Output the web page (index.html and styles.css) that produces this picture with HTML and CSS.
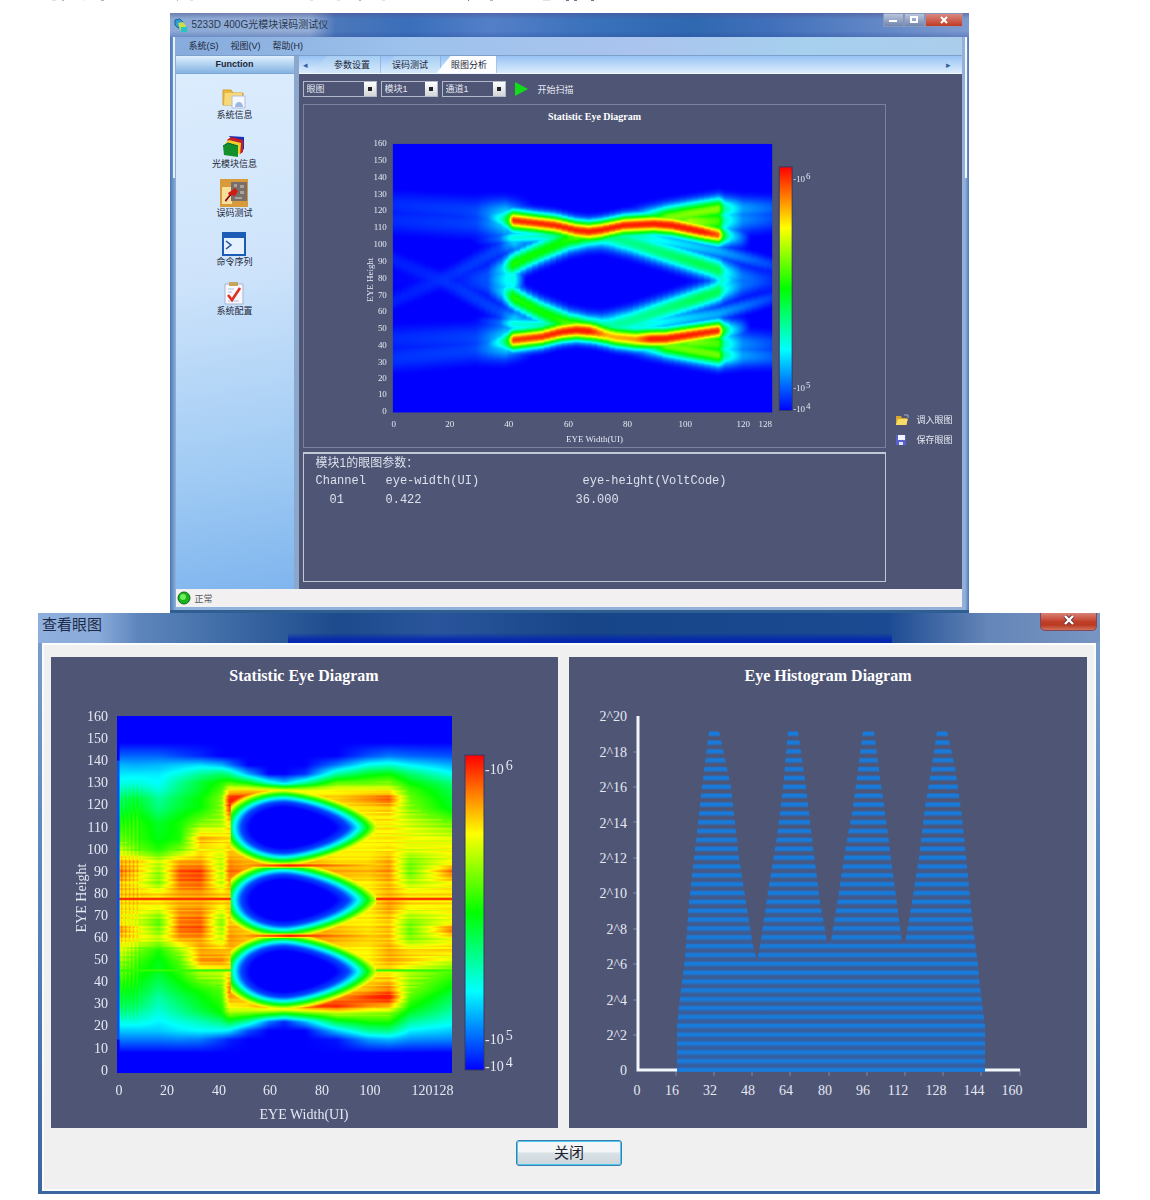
FILE: index.html
```html
<!DOCTYPE html>
<html lang="zh">
<head>
<meta charset="utf-8">
<title>5233D 400G光模块误码测试仪</title>
<link rel="stylesheet" href="styles.css">
</head>
<body>
<svg class="edge-marks" width="600" height="1" aria-hidden="true"><path d="M52 .5h4M83 .5h1M190 .5h3M310 .5h3M337 .5h3M382 .5h3M543 .5h7" stroke="#e2e2e6"/><path d="M62 .5h2M101 .5h3M177 .5h1M359 .5h2M490 .5h3" stroke="#b9b4b4"/><path d="M468 .5h1M566 .5h3M574 .5h3M591 .5h3" stroke="#75708c"/></svg>
<main class="page">

<section class="window app" aria-label="误码测试仪">
  <header class="titlebar">
    <svg class="logo" width="14" height="15" viewBox="0 0 14 15"><path d="M1 2l5-1 3 3v5l-5 1-3-3z" fill="#2f9fd8" stroke="#1c5f92"/><path d="M4 5l5-1 3 4-1 5-5-1z" fill="#c9e04a"/><path d="M7 9h6v5H7z" fill="#22c6c4"/></svg>
    <h1>5233D 400G光模块误码测试仪</h1>
    <div class="win-buttons">
      <button class="wb" aria-label="最小化"><svg width="10" height="8" viewBox="0 0 10 8"><path d="M1 5h8" stroke="#fff" stroke-width="2"/></svg></button>
      <button class="wb" aria-label="最大化"><svg width="10" height="8" viewBox="0 0 10 8"><rect x="2" y="1" width="6" height="5" fill="none" stroke="#fff" stroke-width="2"/></svg></button>
      <button class="wb wb-close" aria-label="关闭窗口"><svg width="10" height="8" viewBox="0 0 10 8"><path d="M2 1l6 6M8 1L2 7" stroke="#fff" stroke-width="2"/></svg></button>
    </div>
  </header>
  <nav class="menubar"><a href="#sys">系统(S)</a><a href="#view">视图(V)</a><a href="#help">帮助(H)</a></nav>
  <div class="workspace">
    <aside class="sidebar">
      <h2>Function</h2>
      <nav class="functions">
        <a href="#info"><svg width="24" height="22" viewBox="0 0 24 22"><path d="M1 3h8l2 3h10v12H1z" fill="#e9b93c"/><path d="M1 3h8l2 3h10v12H1z" fill="none" stroke="#d0a030"/><path d="M3 6h17v12H2z" fill="#f8d978"/><path d="M10 9h13v12H10z" fill="#f4f8ff" stroke="#b2bedb"/><path d="M13 20a4 5 0 0 1 8 0z" fill="#9db6e6"/></svg>系统信息</a>
        <a href="#module"><svg width="24" height="24" viewBox="0 0 24 24"><path d="M7 2l15 1v12l-3 3z" fill="#1d2fb4"/><path d="M5 6l4-3 12 3v12l-3 2z" fill="#c81d24"/><path d="M3 9l4-3 12 3-1 12z" fill="#efd12c"/><path d="M1 12l5-3 10 3v11L2 21z" fill="#13902a"/><path d="M1 12l5-3 10 3" stroke="#063" fill="none"/></svg>光模块信息</a>
        <a href="#ber"><svg width="28" height="28" viewBox="0 0 28 28"><path d="M0 0h28v28H0z" fill="#d89a3a"/><path d="M2 8h10v17H2z" fill="#f6df9b"/><path d="M11 3h16v19H11z" fill="#786f6a"/><path d="M14 5h3v3h-3zM20 6h4v3h-4zM20 12h4v3h-4zM15 18h7v2h-7z" fill="#a9a29c"/><path d="M8 14l3-2 4-3 3 3-3 5-4-1-5 7-1-2 4-5z" fill="#cf1c14"/><path d="M5 22l6-6" stroke="#402" stroke-width="1"/></svg>误码测试</a>
        <a href="#cmd"><svg width="24" height="24" viewBox="0 0 24 24"><rect x="1" y="1" width="22" height="22" fill="#e6f1ff" stroke="#1c5cb4" stroke-width="2"/><path d="M1 1h22v5H1z" fill="#1c5cb4"/><path d="M4 9l5 4-5 4" fill="none" stroke="#24509c" stroke-width="1.6"/></svg>命令序列</a>
        <a href="#config"><svg width="22" height="24" viewBox="0 0 22 24"><path d="M2 3h18v20H2z" fill="#f7f8fd" stroke="#aab4cf"/><path d="M6 1h9v4H6z" fill="#c5a45c"/><path d="M5 8h6M5 11h4M5 20h11" stroke="#b3bfe0"/><path d="M5 14l4 5 8-12" fill="none" stroke="#e12f23" stroke-width="2.6"/></svg>系统配置</a>
      </nav>
    </aside>
    <div class="content">
      <div class="tabs">
        <button class="arrow" aria-label="向左">◂</button>
        <button class="tab">参数设置</button>
        <button class="tab">误码测试</button>
        <button class="tab active">眼图分析</button>
        <button class="arrow last" aria-label="向右">▸</button>
      </div>
      <div class="toolbar">
        <select class="w-l" aria-label="图类型"><option>眼图</option></select>
        <select class="w-s" aria-label="模块"><option>模块1</option></select>
        <select class="w-m" aria-label="通道"><option>通道1</option></select>
        <button class="scan"><svg width="14" height="14" viewBox="0 0 14 14"><path d="M1 0l13 7-13 7z" fill="#12dc1a"/></svg>开始扫描</button>
      </div>
      <div class="panes">
        <div class="left">
          <figure class="chart framed">
            <svg viewBox="0 0 582 343" class="t9" role="img" aria-label="Statistic Eye Diagram">
              <defs><linearGradient id="heat" x1="0" y1="0" x2="0" y2="1"><stop offset="0" stop-color="#f00"/><stop offset=".25" stop-color="#ff0"/><stop offset=".5" stop-color="#0f0"/><stop offset=".75" stop-color="#0ff"/><stop offset="1" stop-color="#00f"/></linearGradient></defs>
              <text class="ttl" x="291" y="15">Statistic Eye Diagram</text>
              <foreignObject x="89" y="39" width="380" height="269"><canvas id="eye1" class="heat" width="256" height="320"></canvas></foreignObject>
              <g class="end"><text x="83" y="41">160</text><text x="83" y="58">150</text><text x="83" y="75">140</text><text x="83" y="92">130</text><text x="83" y="108">120</text><text x="83" y="125">110</text><text x="83" y="142">100</text><text x="83" y="159">90</text><text x="83" y="176">80</text><text x="83" y="193">70</text><text x="83" y="209">60</text><text x="83" y="226">50</text><text x="83" y="243">40</text><text x="83" y="260">30</text><text x="83" y="276">20</text><text x="83" y="293">10</text><text x="83" y="310">0</text></g>
              <g class="mid"><text x="90" y="323">0</text><text x="146" y="323">20</text><text x="205" y="323">40</text><text x="265" y="323">60</text><text x="324" y="323">80</text><text x="382" y="323">100</text><text x="440" y="323">120</text><text x="462" y="323">128</text><text x="291" y="338">EYE Width(UI)</text><text transform="translate(69 175) rotate(-90)">EYE Height</text></g>
              <rect x="476" y="62" width="13" height="244" fill="url(#heat)" stroke="#343b66"/>
              <text x="490" y="77">-10<tspan dy="-3" dx="1">6</tspan></text><text x="490" y="286">-10<tspan dy="-3" dx="1">5</tspan></text><text x="490" y="308">-10<tspan dy="-3" dx="1">4</tspan></text>
            </svg>
          </figure>
          <section class="params">
            <h3>模块1的眼图参数：</h3>
            <table>
              <thead><tr><th class="c1">Channel</th><th class="c2">eye-width(UI)</th><th class="c3 shift">eye-height(VoltCode)</th></tr></thead>
              <tbody><tr><td class="c1 num">01</td><td class="c2">0.422</td><td class="c3">36.000</td></tr></tbody>
            </table>
          </section>
        </div>
        <div class="actions">
          <button><svg width="14" height="12" viewBox="0 0 14 12"><path d="M1 2h5l1 2h5v7H1z" fill="#d9a72e"/><path d="M3 5h10l-2 6H1z" fill="#f7dc6a"/><path d="M9 1h4v3" fill="none" stroke="#9aa9d8"/></svg>调入眼图</button>
          <button><svg width="12" height="12" viewBox="0 0 12 12"><path d="M1 1h10v10H1z" fill="#5a5fd0"/><path d="M3 1h7v5H3z" fill="#f1f3ff"/><path d="M4 8h4v3H4z" fill="#dfe3fa"/></svg>保存眼图</button>
        </div>
      </div>
    </div>
  </div>
  <footer class="status"><svg width="14" height="14" viewBox="0 0 14 14"><circle cx="7" cy="7" r="6" fill="#18b21c" stroke="#146b18"/><circle cx="6" cy="6" r="3" fill="#6df05a"/></svg>正常</footer>
</section>

<section class="window dialog" role="dialog" aria-labelledby="dlg-title">
  <header class="dlg-bar"><h2 id="dlg-title">查看眼图</h2><button class="dlg-x" aria-label="关闭对话框"><svg width="12" height="10" viewBox="0 0 12 10"><path d="M2 1l8 8M10 1L2 9" stroke="#5b3a42" stroke-width="4"/><path d="M2 1l8 8M10 1L2 9" stroke="#fff" stroke-width="2.4"/></svg></button></header>
  <div class="dlg-body">
    <div class="pair">
      <figure class="chart panel">
        <svg viewBox="0 0 507 471" class="t14" role="img" aria-label="Statistic Eye Diagram">
          <text class="ttl" x="253" y="24">Statistic Eye Diagram</text>
          <foreignObject x="66" y="59" width="335" height="357"><canvas id="eye2" class="heat" width="256" height="320"></canvas></foreignObject>
          <g class="end"><text x="57" y="64">160</text><text x="57" y="86">150</text><text x="57" y="108">140</text><text x="57" y="130">130</text><text x="57" y="152">120</text><text x="57" y="175">110</text><text x="57" y="197">100</text><text x="57" y="219">90</text><text x="57" y="241">80</text><text x="57" y="263">70</text><text x="57" y="285">60</text><text x="57" y="307">50</text><text x="57" y="329">40</text><text x="57" y="351">30</text><text x="57" y="373">20</text><text x="57" y="396">10</text><text x="57" y="418">0</text></g>
          <g class="mid"><text x="68" y="438">0</text><text x="116" y="438">20</text><text x="168" y="438">40</text><text x="219" y="438">60</text><text x="271" y="438">80</text><text x="319" y="438">100</text><text x="371" y="438">120</text><text x="392" y="438">128</text><text x="253" y="462">EYE Width(UI)</text><text transform="translate(35 241) rotate(-90)">EYE Height</text></g>
          <rect x="414" y="98" width="19" height="315" fill="url(#heat)" stroke="#343b66"/>
          <text x="434" y="117">-10<tspan dy="-4" dx="2">6</tspan></text><text x="434" y="387">-10<tspan dy="-4" dx="2">5</tspan></text><text x="434" y="414">-10<tspan dy="-4" dx="2">4</tspan></text>
        </svg>
      </figure>
      <figure class="chart panel">
        <svg viewBox="0 0 518 471" class="t14" role="img" aria-label="Eye Histogram Diagram">
          <defs>
            <pattern id="bars" x="0" y="74" width="518" height="8.85" patternUnits="userSpaceOnUse"><path d="M0 1h518v3.6H0z" fill="#177bdc"/><path d="M0 .2h518v.8H0zM0 4.6h518v.8H0z" fill="#2a6cbb"/></pattern>
            <linearGradient id="fillin" x1="0" y1="0" x2="0" y2="1"><stop offset=".2" stop-color="#2f62ab" stop-opacity="0"/><stop offset=".6" stop-color="#2f62ab" stop-opacity=".5"/><stop offset="1" stop-color="#2f62ab" stop-opacity=".85"/></linearGradient>
            <path id="hist" d="M108 415V369L111 340 116 301 120 245 125 201 133 130 140 74H150L162 130 170 201 177 245 184 289 188 303 191 289 195 262 200 228 208 180 214 130 219 74H229L237 130 244 190 251 245 258 284H262L270 235 275 200 284 150 288 120 294 74H305L311 120 318 170 323 210 330 262 333 286H336L343 245 350 200 356 150 361 120 368 74H378L386 110 393 160 398 210 404 270 408 300 411 330 416 369V415z"/>
          </defs>
          <text class="ttl" x="259" y="24">Eye Histogram Diagram</text>
          <g stroke="#8088a4"><path d="M64 95h5M64 130h5M64 165h5M64 201h5M64 236h5M64 272h5M64 307h5M64 343h5M64 378h5M107 413v6M145 413v6M183 413v6M221 413v6M260 413v6M298 413v6M336 413v6M374 413v6M412 413v6M451 413v6"/></g>
          <path d="M69 59v354h382" fill="none" stroke="#f2f5fa" stroke-width="3"/>
          <use href="#hist" fill="url(#fillin)"/><use href="#hist" fill="url(#bars)"/>
          <g class="end"><text x="58" y="64">2^20</text><text x="58" y="100">2^18</text><text x="58" y="135">2^16</text><text x="58" y="171">2^14</text><text x="58" y="206">2^12</text><text x="58" y="241">2^10</text><text x="58" y="277">2^8</text><text x="58" y="312">2^6</text><text x="58" y="348">2^4</text><text x="58" y="383">2^2</text><text x="58" y="418">0</text></g>
          <g class="mid"><text x="68" y="438">0</text><text x="103" y="438">16</text><text x="141" y="438">32</text><text x="179" y="438">48</text><text x="217" y="438">64</text><text x="256" y="438">80</text><text x="294" y="438">96</text><text x="329" y="438">112</text><text x="367" y="438">128</text><text x="405" y="438">144</text><text x="443" y="438">160</text></g>
        </svg>
      </figure>
    </div>
    <button class="close-btn">关闭</button>
  </div>
</section>
</main>
<script src="charts.js"></script>
</body>
</html>
```
FILE: styles.css
```css
* { box-sizing: border-box; }
body { margin: 0; background: #fff; color: #1c2638; font-family: "Liberation Sans", "Noto Sans CJK SC", sans-serif; }
h1, h2, h3, figure { margin: 0; font-weight: normal; }
button { font: inherit; color: inherit; padding: 0; border: 0; background: none; }
a { color: inherit; text-decoration: none; }
svg { display: block; flex: none; }
.edge-marks { height: 1px; }
.page { display: flex; flex-direction: column; align-items: center; padding: 12px 12px 0 0; }
.window { width: 100%; }

/* main application window */
.app { max-width: 799px; padding: 0 7px 3px 6px; font-size: 9px;
  background:
    linear-gradient(#e8eefa, #e8eefa) 3px 24px / 2px 141px no-repeat,
    linear-gradient(#f4f7fc, #f4f7fc) right 2px top 24px / 2px 141px no-repeat,
    linear-gradient(90deg, #4a78b4, #8fb2dc 6px, #94b0d8 795px, #4d79bd);
  border-bottom: 3px solid #2f5f90; }
.titlebar { display: flex; align-items: center; height: 24px; margin: 0 -7px 0 -6px; padding: 0 6px 0 4px; gap: 4px;
  background: linear-gradient(rgba(80,80,140,.5), transparent 6px, transparent 18px, rgba(40,70,150,.3)), linear-gradient(90deg, #8caad6, #93add6 140px, #4c77ba 165px, #3a6fbb 240px, #547fc8 320px, #3a72bb 420px, #2f68b0 520px, #4170bb 600px, #7d9bd0); }
.titlebar h1 { flex: 1; font-size: 10px; line-height: 14px; color: #2a3950; }
.win-buttons { display: flex; align-self: flex-start; }
.wb { display: grid; place-items: center; width: 21px; height: 14px; background: linear-gradient(#b9c5dd, #7286ae); border: 1px solid #8797bb; }
.wb-close { width: 38px; background: linear-gradient(#d98a80, #c03a22); }
.menubar { display: flex; align-items: center; gap: 12px; height: 19px; padding: 0 13px; background: linear-gradient(90deg, #86abdc, #9dc2ec 30%, #aac4ee 60%, #a6d0ee 80%, #abcdec); border-bottom: 1px solid #7ba0cc; line-height: 12px; }
.workspace { display: grid; grid-template-columns: 118px minmax(0, 1fr); }
.sidebar { background: linear-gradient(170deg, #dcedfd, #cfe4fb 40%, #a2ccf4 75%, #7fb5ee); }
.sidebar h2 { font-size: 9px; font-weight: bold; text-align: center; line-height: 17px; background: linear-gradient(#e0f0fd, #a7cbee 60%, #86b2e2); border-bottom: 1px solid #7ea6d4; }
.functions { display: flex; flex-direction: column; align-items: center; }
.functions a { display: flex; flex-direction: column; align-items: center; justify-content: flex-end; height: 49px; line-height: 12px; padding-bottom: 2px; font-size: 9px; }
.content { background: #4e5575; border-left: 5px solid #8ba8cc; display: flex; flex-direction: column; }
.tabs { display: flex; align-items: stretch; height: 18px; background: linear-gradient(#98c2f4, #dcedfd); border-bottom: 1px solid #eef6ff; }
.arrow { width: 14px; color: #33639c; font-size: 9px; }
.arrow.last { margin-left: auto; width: 26px; }
.tab { width: 60px; background: linear-gradient(#a5cdf3, #d5e8fb); border-right: 1px solid #6f9fd4; clip-path: polygon(14px 0, 100% 0, 100% 100%, 0 100%); }
.arrow + .tab { width: 68px; padding-left: 12px; }
.tab.active { background: #fdfeff; margin-left: -4px; padding-left: 6px; }
.toolbar { display: flex; align-items: center; gap: 4px; height: 30px; padding-left: 4px; color: #e6e9f2; }
.toolbar select { appearance: none; height: 16px; padding: 0 14px 0 3px; border: 1px solid #b3b8ca; border-radius: 0; color: #e6e9f2; font: inherit; line-height: 12px;
  background: linear-gradient(#222, #222) right 4px center / 4px 4px no-repeat, linear-gradient(#fff, #d2d6da) right / 12px 100% no-repeat, #4e5575; }
.w-l { width: 74px; } .w-s { width: 57px; } .w-m { width: 64px; }
.scan { display: flex; align-items: center; gap: 10px; margin-left: 4px; }
.panes { flex: 1; display: grid; grid-template-columns: minmax(0, 1fr) 76px; padding: 0 0 7px 4px; }
.left { display: flex; flex-direction: column; gap: 4px; }
.chart svg { width: 100%; height: auto; font-family: "Liberation Serif", serif; fill: #e6e9f3; }
.framed { border: 1px solid #7b829e; }
.t9 { font-size: 9px; } .t9 .ttl { font-size: 10px; }
.t14 { font-size: 14px; } .t14 .ttl { font-size: 16px; }
.ttl { font-weight: bold; text-anchor: middle; fill: #fff; }
.end { text-anchor: end; } .mid { text-anchor: middle; }
.heat { display: block; width: 100%; height: 100%; background: #00f; }
.params { flex: 1; min-height: 130px; padding: 0 12px; border: 1px solid #c3c8d6; border-top-width: 2px; color: #dde1ec; font-size: 12px; }
.params h3 { font-size: 12px; line-height: 18px; }
.params table { width: 100%; table-layout: fixed; border-collapse: collapse; font-family: "Liberation Mono", monospace; line-height: 19px; }
.params th, .params td { padding: 0; font-weight: normal; text-align: left; }
.params .c1 { width: 70px; } .params .c2 { width: 190px; }
.params .num { padding-left: 14px; } .params .shift { padding-left: 7px; }
.actions { display: flex; flex-direction: column; gap: 6px; padding: 309px 0 0 9px; color: #e6e9f2; }
.actions button { display: grid; grid-template-columns: 14px auto; justify-content: start; align-items: center; gap: 8px; height: 14px; line-height: 14px; }
.status { display: flex; align-items: center; gap: 4px; height: 18px; padding: 0 1px; background: #f2f0f0; color: #55585e; }

/* eye diagram dialog */
.dialog { max-width: 1062px; padding: 0 4px 3px; background: linear-gradient(#7d9fcc, #5c88c0 40%, #3d659f); }
.dlg-bar { display: flex; align-items: center; justify-content: space-between; height: 30px; margin: 0 -4px; padding: 0 3px 0 4px; color: #1d2a45;
  background: linear-gradient(transparent 20px, rgba(0,34,178,.85) 27px) 250px 0 / 604px 100% no-repeat,
    linear-gradient(90deg, #8fb0de, #8aabda 60px, #5e86bc 100px, #3b68a3 200px, #1c4a8c 300px, #2a559c 400px, #174588 540px, #1c4a92 850px, #6486b8 950px, #7895c2); }
.dlg-bar h2 { font-size: 15px; line-height: 24px; align-self: flex-start; }
.dlg-x { display: flex; justify-content: center; align-self: flex-start; width: 57px; height: 18px; padding-top: 2px; border-radius: 0 0 5px 5px; background: linear-gradient(#d98378, #c2402a 50%, #b93a22 70%, #d0705a); border: 1px solid #80485c; border-top: 0; }
.dlg-body { display: flex; flex-direction: column; align-items: center; gap: 12px; padding: 12px 7px 23px; background: #f0f0f0; border: 2px solid #f9fbfd; border-top-color: #fff; }
.pair { width: 100%; display: grid; grid-template-columns: 507fr 518fr; gap: 11px; }
.panel { background: #4e5575; }
.close-btn { width: 106px; height: 26px; border: 1px solid #3c7fb1; border-radius: 3px; box-shadow: inset 0 0 0 1px #4cc8ee; background: linear-gradient(#f3f5f6 45%, #d9e2e6 50%, #cbd6db); font-size: 15px; line-height: 22px; color: #1c2230; }
```
FILE: charts.js
```js
// Heat maps are evaluated on a 128 x 160 UI/height grid and coloured blue -> red.
function interp(points, x) {
  if (x <= points[0][0]) return points[0][1];
  for (let i = 1; i < points.length; i++) {
    if (x <= points[i][0]) {
      const a = points[i - 1], b = points[i];
      return a[1] + (b[1] - a[1]) * (x - a[0]) / (b[0] - a[0]);
    }
  }
  return points[points.length - 1][1];
}

function paint(id, field) {
  const canvas = document.getElementById(id), ctx = canvas.getContext('2d');
  const w = canvas.width, h = canvas.height, img = ctx.createImageData(w, h);
  for (let j = 0; j < h; j++) {
    for (let i = 0; i < w; i++) {
      const v = Math.max(0, Math.min(.97, field(128 * (i + 0.5) / w, 160 * (1 - (j + 0.5) / h)))) * 4;
      const k = 4 * (j * w + i);
      const rgb = v < 1 ? [0, v, 1] : v < 2 ? [0, 1, 2 - v] : v < 3 ? [v - 2, 1, 0] : [1, 4 - v, 0];
      img.data[k] = rgb[0] * 255; img.data[k + 1] = rgb[1] * 255; img.data[k + 2] = rgb[2] * 255; img.data[k + 3] = 255;
    }
  }
  ctx.putImageData(img, 0, 0);
}

// ridge: centre line, amplitude along x, half-width
const ridges = [
  [[[0, 119], [30, 117], [40, 114.5], [55, 111.5], [62, 108.6], [66, 107.8], [70, 108.6], [78, 111.5], [88, 112.3], [94, 111.5], [109, 106], [118, 104]], [[24, 0], [32, .1], [37, .28], [39, .5], [40.5, .97], [104, 1], [110, .92], [111.5, .5], [114, .26], [121, 0]], 3.9],
  [[[0, 38], [30, 40], [40, 43], [50, 45], [57, 48], [62, 49], [67, 48.3], [75, 44.8], [82, 43.6], [92, 44], [109, 48.5], [118, 50]], [[24, 0], [32, .1], [37, .28], [39, .5], [40.5, .95], [66, 1], [72, .83], [82, .86], [87, 1], [110, .97], [111.5, .5], [114, .26], [121, 0]], 3.9],
  [[[78, 114], [90, 116], [110, 121.5], [128, 122]], [[78, 0], [92, .55], [100, .6], [110, .63], [112, .33], [118, .16], [128, .1]], 4.5],
  [[[90, 113], [110, 114], [128, 115]], [[88, 0], [100, .6], [110, .55], [112, .3], [118, .14], [128, .08]], 5],
  [[[78, 42], [90, 40], [110, 34], [128, 33]], [[78, 0], [92, .55], [100, .58], [110, .6], [112, .33], [118, .16], [128, .1]], 4.5],
  [[[90, 43], [110, 41], [128, 41]], [[88, 0], [100, .55], [110, .55], [112, .3], [118, .14], [128, .08]], 5],
  [[[20, 78], [30, 81], [40, 88], [50, 96], [60, 103], [66, 105]], [[20, .01], [32, .07], [37, .2], [40.5, .53], [54, .52], [62, .5], [70, .3], [74, 0]], 4.6],
  [[[20, 79], [30, 77], [40, 69], [50, 60], [60, 53], [66, 51]], [[20, .01], [32, .07], [37, .2], [40.5, .54], [54, .52], [62, .5], [70, .3], [74, 0]], 4.6],
  [[[62, 106], [70, 105], [80, 101], [110, 85], [128, 77]], [[60, 0], [68, .25], [76, .35], [84, .38], [104, .44], [110, .42], [112, .25], [118, .1], [128, .04]], 4.6],
  [[[62, 50], [70, 51], [80, 55], [110, 72], [128, 80]], [[60, 0], [68, .25], [76, .33], [84, .36], [104, .44], [110, .42], [112, .25], [118, .1], [128, .04]], 4.6],
  [[[30, 103], [40, 104], [55, 105.5], [64, 106]], [[26, 0], [36, .1], [40, .25], [56, .3], [64, .2], [70, 0]], 2.6],
  [[[30, 54], [40, 53], [55, 51.5], [64, 51]], [[26, 0], [36, .1], [40, .25], [56, .3], [64, .2], [70, 0]], 2.6],
  [[[72, 107], [80, 106], [110, 96], [128, 88]], [[70, 0], [84, .25], [110, .17], [128, .07]], 3],
  [[[72, 50], [80, 51], [110, 59], [128, 68]], [[70, 0], [84, .25], [110, .17], [128, .07]], 3],
  [[[0, 66], [15, 78], [40, 101]], [[0, .04], [15, .04], [36, .08], [41, .18], [50, 0]], 4],
  [[[0, 91], [15, 80], [40, 56]], [[0, .04], [15, .04], [36, .08], [41, .18], [50, 0]], 4],
  [[[0, 79], [128, 79]], [[20, .01], [32, .07], [38, .24], [41, .27], [45, 0], [107, 0], [111, .27], [116, .1], [128, .02]], 6],
  [[[0, 124], [40, 119]], [[0, .05], [28, .07], [38, .18], [48, 0]], 5.5],
  [[[0, 114], [40, 111]], [[0, .05], [28, .07], [38, .18], [48, 0]], 5.5],
  [[[0, 44], [40, 46]], [[0, .05], [28, .07], [38, .18], [48, 0]], 5.5],
  [[[0, 32], [40, 39]], [[0, .06], [28, .07], [38, .18], [48, 0]], 5.5]
];

paint('eye1', (x, y) => {
  const xs = Math.round(x / 2) + x * 0.5;
  let top = 0, sum = 0;
  for (const [line, amp, s] of ridges) {
    const d = (y - interp(line, xs)) / s;
    const v = interp(amp, x) * Math.exp(-d * d / 2);
    top = Math.max(top, v);
    sum += v;
  }
  return Math.max(0, top + 0.25 * (sum - top) * (1 - top) - 0.012);
});

const cols = [0, 8, 16, 24, 32, 40, 43, 50, 58, 64, 72, 84, 96, 104, 112, 128];
const rows = [
  [148, 0, 0, 0, 0, 0, 0, 0, 0, 0, 0, 0, 0, 0, 0, 0, 0],
  [142, .1, .1, .1, .07, .04, 0, 0, 0, 0, 0, 0, 0, .08, .12, .1, .08],
  [138, .18, .17, .18, .2, .22, .18, .12, 0, 0, 0, 0, .12, .27, .3, .24, .17],
  [134, .23, .23, .23, .28, .35, .4, .36, .17, 0, 0, .05, .34, .47, .5, .4, .26],
  [130, .27, .28, .25, .36, .45, .53, .57, .5, .3, .2, .35, .6, .6, .62, .5, .38],
  [127, .32, .35, .28, .38, .46, .57, .75, .76, .74, .7, .7, .74, .74, .73, .56, .42],
  [123, .4, .45, .35, .43, .5, .62, .98, 1, 1, 1, .82, .8, .87, .92, .6, .45],
  [119, .43, .48, .37, .45, .5, .62, .95, .86, .8, .8, .78, .76, .78, .8, .62, .47],
  [112, .52, .54, .46, .52, .62, .66, .78, .78, .8, .8, .78, .76, .76, .76, .7, .6],
  [105, .6, .55, .48, .52, .84, .8, .78, .78, .8, .8, .78, .76, .76, .77, .75, .72],
  [100, .7, .6, .53, .62, .77, .74, .8, .78, .8, .8, .78, .76, .76, .78, .72, .76],
  [95, .82, .8, .7, .83, .84, .68, .86, .82, .84, .84, .82, .78, .78, .84, .62, .74],
  [90, .9, .8, .64, .92, .94, .68, .9, .86, .88, .88, .86, .84, .82, .86, .6, .9],
  [85, .82, .75, .62, .88, .9, .68, .83, .78, .8, .8, .78, .76, .76, .82, .67, .75],
  [80, .8, .8, .78, .83, .84, .79, .8, .78, .8, .8, .78, .76, .76, .82, .77, .78],
  [76, .78, .78, .77, .82, .83, .78, .8, .78, .8, .8, .78, .76, .76, .85, .78, .77],
  [68, .77, .7, .58, .88, .9, .62, .8, .78, .8, .8, .78, .76, .76, .8, .62, .73],
  [64, .88, .76, .62, .9, .92, .66, .84, .8, .83, .85, .85, .82, .78, .82, .6, .9],
  [60, .8, .76, .7, .84, .85, .7, .86, .82, .86, .88, .88, .84, .8, .82, .63, .74],
  [55, .74, .62, .52, .66, .84, .82, .82, .78, .8, .8, .78, .76, .76, .84, .79, .8],
  [50, .66, .56, .48, .58, .86, .87, .8, .78, .8, .8, .78, .76, .76, .84, .8, .7],
  [45, .6, .53, .46, .54, .67, .69, .78, .78, .8, .8, .78, .76, .76, .76, .67, .57],
  [37, .5, .47, .38, .46, .52, .58, .88, .78, .8, .8, .78, .76, .82, .88, .62, .47],
  [34, .46, .44, .34, .42, .49, .56, .84, .8, .8, .8, .8, .84, .95, 1, .58, .42],
  [30, .42, .4, .31, .38, .46, .53, .76, .78, .88, .93, .95, .97, .86, .82, .52, .37],
  [27, .37, .35, .28, .35, .42, .5, .66, .64, .6, .55, .62, .7, .66, .64, .46, .33],
  [23, .28, .28, .24, .28, .32, .38, .45, .34, .12, .04, .18, .45, .52, .53, .35, .27],
  [19, .2, .2, .2, .23, .25, .25, .23, .08, 0, 0, 0, .2, .36, .38, .24, .2],
  [15, .12, .12, .12, .13, .12, .06, .03, 0, 0, 0, 0, .02, .15, .18, .14, .13],
  [9, 0, 0, 0, 0, 0, 0, 0, 0, 0, 0, 0, 0, 0, 0, 0, 0]
];
function table(x, y) {
  let a = rows[0], b = rows[0];
  for (const r of rows) { b = r; if (r[0] <= y) break; a = r; }
  const f = a === b || y < b[0] ? 1 : (a[0] - y) / (a[0] - b[0]);
  let i = 1;
  while (i < cols.length - 1 && cols[i] < x) i++;
  const g = Math.max(0, (x - cols[i - 1]) / (cols[i] - cols[i - 1]));
  const at = (r) => r[i] + (r[i + 1] - r[i]) * g;
  return at(a) + (at(b) - at(a)) * f;
}

const rim = [[.8, 0], [1, .07], [1.15, .25], [1.27, .45], [1.36, .6], [1.45, .75], [1.6, 1]];
paint('eye2', (x, y) => {
  if (x < 1) return y > 140 || y < 15 ? 0 : 0.08;
  let t = table(x, y);
  const line = Math.round(y * 1.25);
  if (t > .6) t += 0.03 * Math.sin(line * 2.4) * (x > 43 && x < 99 ? .6 : 1);
  if (x < 9 && t > .3) t += 0.04 * Math.sin(x * 4.2);
  if (x > 43.5 && x < 99) {
    const dx = x - 64;
    for (const cy of [110, 77.5, 45.5]) {
      const dy = Math.abs(y - cy) / 11.5;
      if (dy > 1.6) continue;
      const r = dx < 0 ? Math.hypot(dx / 16.5, dy) : Math.pow(Math.pow(dx / 24.5, 1.5) + Math.pow(dy, 1.5), 1 / 1.5);
      t = Math.min(t, interp(rim, r));
    }
    for (const cy of [93, 61.5]) {
      const d = (y - cy) / 1.1;
      t = Math.max(t, interp([[44, .82], [56, .92], [66, 1], [84, .9], [99, .82]], x) * Math.exp(-d * d / 2));
    }
  }
  if ((x < 43.5 || x > 99) && Math.abs(y - 78) < .6) return .95;
  if ((x < 43.5 || x > 99) && Math.abs(y - 46) < .4) return .55;
  return t;
});
```
